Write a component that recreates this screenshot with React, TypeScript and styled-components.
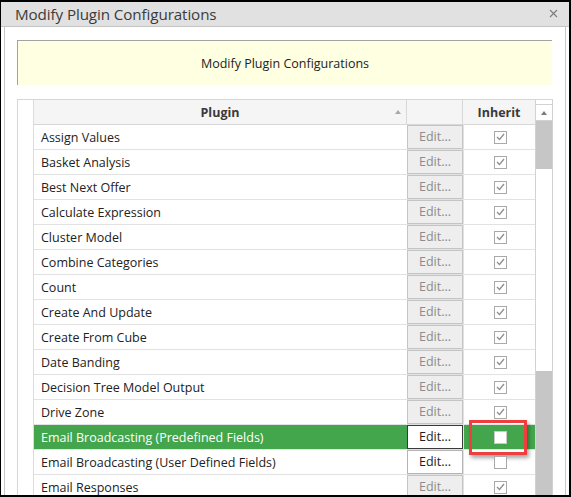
import React from 'react';
import styled, { createGlobalStyle } from 'styled-components';

const GlobalStyle = createGlobalStyle`
  html, body {
    margin: 0;
    padding: 0;
    background: #ffffff;
  }
  body {
    font-family: "Open Sans", "Noto Sans", "Liberation Sans", sans-serif;
  }
`;

const Frame = styled.div`
  width: 571px;
  height: 497px;
  box-sizing: border-box;
  border-style: solid;
  border-color: #000;
  border-width: 2px 2px 2px 1px;
  background: #fff;
  display: flex;
  flex-direction: column;
  overflow: hidden;
`;

const TitleBar = styled.div`
  height: 25px;
  box-sizing: border-box;
  flex: none;
  background: #e1e1e1;
  border-bottom: 1px solid #c4c4c4;
  display: flex;
  align-items: center;
  justify-content: space-between;
  padding: 0 11px 1px 14px;
`;

const Title = styled.span`
  font-size: 15.2px;
  color: #3b3b3b;
  letter-spacing: -0.1px;
`;

const CloseIcon = styled.svg`
  width: 9px;
  height: 9px;
  display: block;
`;

const Body = styled.div`
  flex: 1;
  min-height: 0;
  margin: 0 3px;
  border-left: 1px solid #c8c8c8;
  border-right: 1px solid #c8c8c8;
  padding: 13px 13px 0 12px;
  display: flex;
  flex-direction: column;
`;

const Banner = styled.div`
  height: 45px;
  box-sizing: border-box;
  flex: none;
  background: #ffffe1;
  border-top: 1px solid #a3a3a3;
  border-left: 1px solid #a3a3a3;
  display: flex;
  align-items: center;
  justify-content: center;
  font-size: 12.5px;
  color: #222;
`;

const GridBox = styled.div`
  margin-top: 14px;
  margin-right: -1px;
  flex: 1;
  min-height: 0;
  border-top: 1px solid #d6d6d6;
  border-left: 1px solid #d6d6d6;
  display: flex;
  overflow: hidden;
`;

const RowIndicator = styled.div`
  width: 16px;
  box-sizing: border-box;
  flex: none;
  border-right: 1px solid #dcdcdc;
  background: #fff;
`;

const Table = styled.div`
  width: 501px;
  flex: none;
  display: flex;
  flex-direction: column;
`;

const HeaderRow = styled.div`
  height: 25px;
  box-sizing: border-box;
  flex: none;
  display: flex;
  background: #f5f5f5;
  border-bottom: 1px solid #d8d8d8;
`;

const HeaderCell = styled.div<{ $w: number; $last?: boolean }>`
  width: ${p => p.$w}px;
  box-sizing: border-box;
  border-right: ${p => (p.$last ? 'none' : '1px solid #d8d8d8')};
  position: relative;
  display: flex;
  align-items: center;
  justify-content: center;
  font-size: 12.5px;
  font-weight: 700;
  color: #3a3a3a;
`;

const SortArrow = styled.span`
  position: absolute;
  right: 5px;
  top: 10px;
  width: 0;
  height: 0;
  border-left: 3.5px solid transparent;
  border-right: 3.5px solid transparent;
  border-bottom: 4px solid #a8a8a8;
`;

const Row = styled.div<{ $selected?: boolean }>`
  height: 25px;
  box-sizing: border-box;
  flex: none;
  display: flex;
  border-bottom: 1px solid #e2e2e2;
  background: ${p => (p.$selected ? '#43a64c' : '#fff')};
  color: ${p => (p.$selected ? '#fff' : '#222')};
`;

const NameCell = styled.div`
  width: 373px;
  box-sizing: border-box;
  padding-left: 7px;
  display: flex;
  align-items: center;
  font-size: 12.5px;
  white-space: nowrap;
  overflow: hidden;
`;

const EditCell = styled.div`
  width: 56px;
  box-sizing: border-box;
  display: flex;
`;

const EditButton = styled.button<{ $enabled?: boolean; $focused?: boolean }>`
  width: 56px;
  height: 100%;
  box-sizing: border-box;
  margin: 0;
  padding: 0 0 1px;
  font-family: inherit;
  font-size: 12.5px;
  border: 1px solid
    ${p => (p.$focused ? '#3a3a3a' : p.$enabled ? '#b4b4b4' : '#c4c4c4')};
  background: ${p => (p.$enabled ? '#fff' : '#eeeeee')};
  color: ${p => (p.$enabled ? '#1e1e1e' : '#8c8c8c')};
`;

const CheckCell = styled.div`
  width: 72px;
  box-sizing: border-box;
  border-left: 1px solid #e2e2e2;
  position: relative;
  display: flex;
  align-items: center;
  justify-content: center;
`;

const CheckBox = styled.span<{ $filled?: boolean }>`
  width: 13px;
  height: 13px;
  box-sizing: border-box;
  border: 1px solid ${p => (p.$filled ? '#c9c9c9' : '#a9a9a9')};
  background: #fff;
  display: flex;
  align-items: center;
  justify-content: center;
  margin-left: 1px;
`;

const Highlight = styled.span`
  position: absolute;
  left: 5px;
  top: -5px;
  width: 58px;
  height: 35px;
  box-sizing: border-box;
  border: 3px solid #ef3e3e;
  box-shadow: 2px 3px 4px rgba(0, 0, 0, 0.35);
  pointer-events: none;
`;

const ScrollBar = styled.div`
  width: 18px;
  box-sizing: border-box;
  flex: none;
  border-left: 1px solid #d2d2d2;
  border-right: 1px solid #d2d2d2;
  display: flex;
  flex-direction: column;
`;

const ScrollCap = styled.div`
  height: 5px;
  flex: none;
  box-sizing: border-box;
  border-bottom: 1px solid #d2d2d2;
  background: #fff;
`;

const ScrollButton = styled.div`
  height: 16px;
  flex: none;
  box-sizing: border-box;
  border-bottom: 1px solid #d2d2d2;
  background: #fff;
  display: flex;
  align-items: center;
  justify-content: center;
`;

const UpArrow = styled.span`
  width: 0;
  height: 0;
  border-left: 3.5px solid transparent;
  border-right: 3.5px solid transparent;
  border-bottom: 4px solid #7a7a7a;
`;

const Track = styled.div<{ $h?: number }>`
  flex: ${p => (p.$h ? 'none' : '1')};
  height: ${p => (p.$h ? `${p.$h}px` : 'auto')};
  background: #c6c6c6;
`;

const Thumb = styled.div`
  height: 202px;
  flex: none;
  background: #fff;
`;

type Plugin = { name: string; editable?: boolean; inherit: boolean; selected?: boolean };

const plugins: Plugin[] = [
  { name: 'Assign Values', inherit: true },
  { name: 'Basket Analysis', inherit: true },
  { name: 'Best Next Offer', inherit: true },
  { name: 'Calculate Expression', inherit: true },
  { name: 'Cluster Model', inherit: true },
  { name: 'Combine Categories', inherit: true },
  { name: 'Count', inherit: true },
  { name: 'Create And Update', inherit: true },
  { name: 'Create From Cube', inherit: true },
  { name: 'Date Banding', inherit: true },
  { name: 'Decision Tree Model Output', inherit: true },
  { name: 'Drive Zone', inherit: true },
  { name: 'Email Broadcasting (Predefined Fields)', editable: true, inherit: false, selected: true },
  { name: 'Email Broadcasting (User Defined Fields)', editable: true, inherit: false },
  { name: 'Email Responses', inherit: true },
];

const Tick = () => (
  <svg width="9" height="8" viewBox="0 0 9 8">
    <polyline points="1,4 3.5,6.5 8,1" fill="none" stroke="#8f8f8f" strokeWidth="1.3" />
  </svg>
);

export default function App() {
  return (
    <>
      <GlobalStyle />
      <Frame>
        <TitleBar>
          <Title>Modify Plugin Configurations</Title>
          <CloseIcon viewBox="0 0 9 9">
            <path d="M1 1 L8 8 M8 1 L1 8" stroke="#7d7d7d" strokeWidth="1.1" />
          </CloseIcon>
        </TitleBar>
        <Body>
          <Banner>Modify Plugin Configurations</Banner>
          <GridBox>
            <RowIndicator />
            <Table>
              <HeaderRow>
                <HeaderCell $w={373}>
                  Plugin
                  <SortArrow />
                </HeaderCell>
                <HeaderCell $w={56} />
                <HeaderCell $w={72} $last>
                  Inherit
                </HeaderCell>
              </HeaderRow>
              {plugins.map(p => (
                <Row key={p.name} $selected={p.selected}>
                  <NameCell>{p.name}</NameCell>
                  <EditCell>
                    <EditButton $enabled={p.editable} $focused={p.selected}>
                      Edit...
                    </EditButton>
                  </EditCell>
                  <CheckCell>
                    <CheckBox $filled={p.selected}>{p.inherit && <Tick />}</CheckBox>
                    {p.selected && <Highlight />}
                  </CheckCell>
                </Row>
              ))}
            </Table>
            <ScrollBar>
              <ScrollCap />
              <ScrollButton>
                <UpArrow />
              </ScrollButton>
              <Track $h={48} />
              <Thumb />
              <Track />
            </ScrollBar>
          </GridBox>
        </Body>
      </Frame>
    </>
  );
}
